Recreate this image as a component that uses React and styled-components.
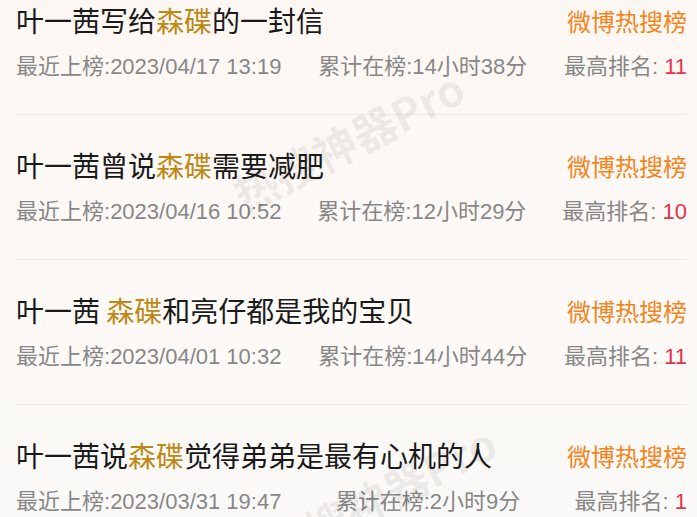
import styled, { createGlobalStyle } from 'styled-components'

const GlobalStyle = createGlobalStyle`
    html, body {
        margin: 0;
        padding: 0;
        height: 100%;
        overflow: hidden;
        background: #fcf8f5;
    }
`

const Page = styled.div`
    position: relative;
    width: 697px;
    height: 517px;
    overflow: hidden;
    background: linear-gradient(180deg, #fdf7f3 0%, #fcf9f6 60%, #fbf9f7 100%);
    font-family: "Liberation Sans", "Noto Sans CJK SC", sans-serif;
`

const List = styled.div`
    margin-top: -30px;
    padding: 0 10px 0 16px;
`

const Item = styled.div`
    padding: 32px 0 35px;
    border-bottom: 1px solid #ece8e4;
`

const TitleRow = styled.div`
    display: flex;
    justify-content: space-between;
    align-items: center;
    height: 36px;
`

const Title = styled.div`
    font-family: "Noto Sans CJK SC", sans-serif;
    font-size: 28px;
    line-height: 36px;
    color: #1a1a1a;
    white-space: pre;
`

const Keyword = styled.span`
    color: #bd8814;
`

const Source = styled.div`
    font-family: "Noto Sans CJK SC", sans-serif;
    font-size: 24px;
    color: #f3851e;
`

const Meta = styled.div`
    display: flex;
    justify-content: space-between;
    align-items: center;
    margin-top: 11px;
    height: 30px;
    font-size: 22px;
    color: #878787;
`

const Rank = styled.span`
    color: #e5334b;
`

const Watermarks = styled.div`
    position: absolute;
    inset: 0;
    pointer-events: none;
`

const Mark = styled.div`
    position: absolute;
    left: ${p => p.x}px;
    top: ${p => p.y}px;
    transform: translate(-50%, -50%) rotate(-27deg);
    font-family: "Noto Sans CJK SC", sans-serif;
    font-weight: 700;
    font-size: 44px;
    color: rgba(0, 0, 0, 0.065);
    white-space: nowrap;
`

const items = [
    { pre: '叶一茜写给', post: '的一封信', last: '2023/04/17 13:19', total: '14小时38分', rank: '11' },
    { pre: '叶一茜曾说', post: '需要减肥', last: '2023/04/16 10:52', total: '12小时29分', rank: '10' },
    { pre: '叶一茜 ', post: '和亮仔都是我的宝贝', last: '2023/04/01 10:32', total: '14小时44分', rank: '11' },
    { pre: '叶一茜说', post: '觉得弟弟是最有心机的人', last: '2023/03/31 19:47', total: '2小时9分', rank: '1' },
]

export default function App() {
    return <>
        <GlobalStyle />
        <Page>
            <List>
                {items.map((it, i) => (
                    <Item key={i}>
                        <TitleRow>
                            <Title>{it.pre}<Keyword>森碟</Keyword>{it.post}</Title>
                            <Source>微博热搜榜</Source>
                        </TitleRow>
                        <Meta>
                            <span>最近上榜:{it.last}</span>
                            <span>累计在榜:{it.total}</span>
                            <span>最高排名: <Rank>{it.rank}</Rank></span>
                        </Meta>
                    </Item>
                ))}
            </List>
            <Watermarks>
                <Mark x={348} y={140}>热搜神器Pro</Mark>
                <Mark x={380} y={495}>热搜神器Pro</Mark>
            </Watermarks>
        </Page>
    </>
}
